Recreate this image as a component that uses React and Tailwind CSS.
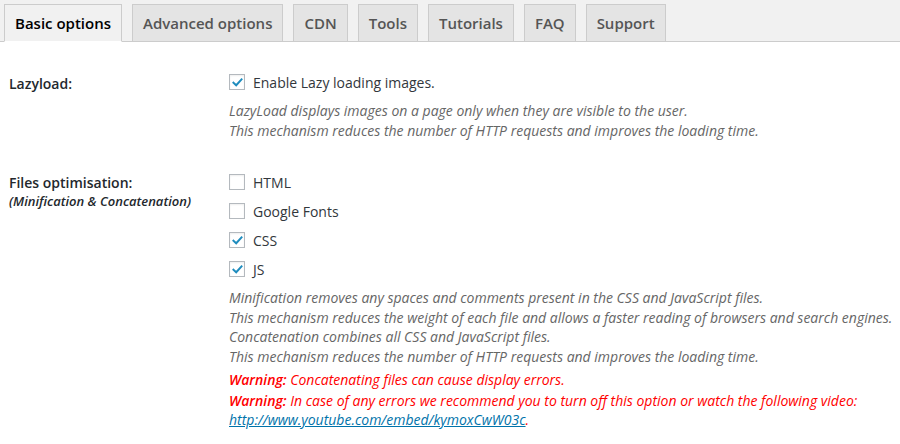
import React from "react"

const tabs = ["Basic options", "Advanced options", "CDN", "Tools", "Tutorials", "FAQ", "Support"]

function Check({ checked, label }) {
  return (
    <label className="flex items-center h-[20px] text-[#32373c]">
      <span className="w-[16px] h-[16px] border border-[#b4b9be] bg-white flex items-center justify-center mr-[8px] shadow-[inset_0_1px_2px_rgba(0,0,0,0.07)]">
        {checked && (
          <svg viewBox="0 0 16 16" className="w-[13px] h-[13px]">
            <path d="M3 8.2 L6.4 11.4 L13 4.2" fill="none" stroke="#1e8cbe" strokeWidth="2.4" strokeLinecap="square" />
          </svg>
        )}
      </span>
      {label}
    </label>
  )
}

export default function App() {
  return (
    <div className="bg-white min-h-[444px] text-[14px] text-[#23282d]" style={{ fontFamily: "'Open Sans', sans-serif" }}>
      <div className="flex items-end h-[42px] pl-[4px] gap-[10px] bg-[#f1f1f1] border-b border-[#ccc]">
        {tabs.map((t, i) => (
          <div
            key={t}
            className={
              "h-[38px] -mb-px px-[10px] flex items-center border text-[15px] font-semibold " +
              (i === 0
                ? "bg-[#f1f1f1] border-[#ccc] border-b-white text-black"
                : "bg-[#e4e4e4] border-[#ccc] text-[#555]")
            }
          >
            {t}
          </div>
        ))}
      </div>

      <div className="grid grid-cols-[229px_1fr] pt-[30px]">
        <div className="pl-[9px] pt-[1px] font-semibold">Lazyload:</div>
        <div>
          <Check checked label="Enable Lazy loading images." />
          <p className="mt-[9px] text-[14px] italic text-[#666] leading-[19.5px]">
            LazyLoad displays images on a page only when they are visible to the user.
            <br />
            This mechanism reduces the number of HTTP requests and improves the loading time.
          </p>
        </div>

        <div className="pl-[9px] pt-[33px]">
          <div className="leading-[20px] font-semibold">Files optimisation:</div>
          <div className="text-[13px] italic font-semibold leading-[16px]">(Minification &amp; Concatenation)</div>
        </div>
        <div className="pt-[32px] flex flex-col">
          <div className="flex flex-col gap-[9px]">
            <Check label="HTML" />
            <Check label="Google Fonts" />
            <Check checked label="CSS" />
            <Check checked label="JS" />
          </div>
          <p className="mt-[9px] text-[14px] italic text-[#666] leading-[19.5px]">
            Minification removes any spaces and comments present in the CSS and JavaScript files.
            <br />
            This mechanism reduces the weight of each file and allows a faster reading of browsers and search engines.
            <br />
            Concatenation combines all CSS and JavaScript files.
            <br />
            This mechanism reduces the number of HTTP requests and improves the loading time.
          </p>
          <p className="mt-[4px] text-[14px] italic text-[#f00] leading-[19.5px]">
            <b className="font-semibold">Warning:</b> Concatenating files can cause display errors.
          </p>
          <p className="mt-[1px] text-[14px] italic text-[#f00] leading-[19.5px]">
            <b className="font-semibold">Warning:</b> In case of any errors we recommend you to turn off this option or watch the following video:
            <br />
            <a href="#" className="text-[#0073aa] underline">http://www.youtube.com/embed/kymoxCwW03c</a>.
          </p>
        </div>
      </div>
    </div>
  )
}
